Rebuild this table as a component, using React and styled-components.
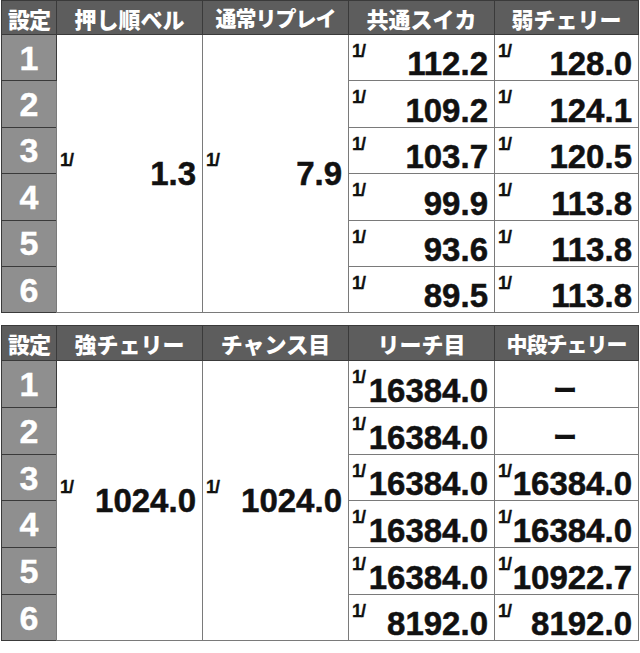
import React from "react";
import styled, { createGlobalStyle } from "styled-components";

const GlobalStyle = createGlobalStyle`
  html, body {
    margin: 0;
    padding: 0;
    background: #ffffff;
  }
  body {
    font-family: "Liberation Sans", Arial, sans-serif;
  }
`;

const Page = styled.div`
  width: 640px;
  padding: 0 0 0 1px;
  display: flex;
  flex-direction: column;
  gap: 12px;
`;

const Table = styled.table`
  width: 637px;
  table-layout: fixed;
  border-collapse: collapse;
  border: 1px solid #3c3c3c;
`;

const HeadCell = styled.th`
  height: ${(p) => p.$h}px;
  padding: 0;
  background: #5d5d5d;
  color: #ffffff;
  border: 1px solid #3a3a3a;
  font-family: "Noto Sans CJK JP", sans-serif;
  font-weight: 900;
  font-size: ${(p) => (p.$narrow ? "21px" : "22px")};
  letter-spacing: ${(p) => (p.$tight ? "-1px" : "0")};
  line-height: 1;
  text-align: center;
  white-space: nowrap;
`;

const LevelCell = styled.td`
  height: ${(p) => p.$h}px;
  padding: 0;
  background: #8f8f8f;
  color: #ffffff;
  border: 1px solid #3a3a3a;
  font-family: "Liberation Sans", Arial, sans-serif;
  font-weight: 700;
  font-size: 34px;
  line-height: 1;
  text-align: center;
  vertical-align: middle;
  -webkit-text-stroke: 0.4px #ffffff;
`;

const ValueCell = styled.td`
  padding: 0 6px 0 3px;
  background: #ffffff;
  border: 1px solid #7a7a7a;
  vertical-align: ${(p) => (p.$merged ? "middle" : "bottom")};
`;

const Inner = styled.div`
  display: flex;
  justify-content: space-between;
  align-items: ${(p) => (p.$merged ? "flex-start" : "flex-end")};
`;

const Sup = styled.span`
  align-self: flex-start;
  margin-top: ${(p) => (p.$merged ? "-6px" : "6px")};
  font-family: "Liberation Sans", Arial, sans-serif;
  font-size: 18px;
  font-weight: 700;
  line-height: 1;
  color: #111111;
  letter-spacing: -1px;
  -webkit-text-stroke: 0.3px #111111;
`;

const Num = styled.span`
  font-family: "Liberation Sans", Arial, sans-serif;
  font-size: 33px;
  font-weight: 700;
  line-height: 1;
  color: #111111;
  white-space: nowrap;
  -webkit-text-stroke: 0.5px #111111;
`;

const Dash = styled.div`
  display: flex;
  align-items: center;
  justify-content: center;
  padding-bottom: 6px;
  font-family: "Noto Sans CJK JP", sans-serif;
  font-weight: 900;
  font-size: 24px;
  line-height: 1;
  color: #111111;
`;

const Col = styled.col`
  width: ${(p) => p.$w}px;
`;

const Value = ({ v, merged, h }) =>
  v === "-" ? (
    <Dash>ー</Dash>
  ) : (
    <Inner $merged={merged} style={merged ? undefined : { height: h }}>
      <Sup $merged={merged}>1/</Sup>
      <Num>{v}</Num>
    </Inner>
  );

const table1 = {
  head: 33,
  row: 45.4,
  heads: ["押し順ベル", "通常リプレイ", "共通スイカ", "弱チェリー"],
  merged: ["1.3", "7.9"],
  rows: [
    ["112.2", "128.0"],
    ["109.2", "124.1"],
    ["103.7", "120.5"],
    ["99.9", "113.8"],
    ["93.6", "113.8"],
    ["89.5", "113.8"],
  ],
};

const table2 = {
  head: 34,
  row: 45.7,
  heads: ["強チェリー", "チャンス目", "リーチ目", "中段チェリー"],
  merged: ["1024.0", "1024.0"],
  rows: [
    ["16384.0", "-"],
    ["16384.0", "-"],
    ["16384.0", "16384.0"],
    ["16384.0", "16384.0"],
    ["16384.0", "10922.7"],
    ["8192.0", "8192.0"],
  ],
};

const ProbTable = ({ data }) => (
  <Table>
    <colgroup>
      <Col $w={55} />
      <Col $w={146} />
      <Col $w={146} />
      <Col $w={146} />
      <Col $w={144} />
    </colgroup>
    <thead>
      <tr>
        <HeadCell $h={data.head} $tight>
          設定
        </HeadCell>
        {data.heads.map((h) => (
          <HeadCell
            key={h}
            $h={data.head}
            $narrow={h.length > 5}
            $tight={h.length > 5}
          >
            {h}
          </HeadCell>
        ))}
      </tr>
    </thead>
    <tbody>
      {data.rows.map((r, i) => (
        <tr key={i}>
          <LevelCell $h={data.row}>{i + 1}</LevelCell>
          {i === 0 &&
            data.merged.map((m, j) => (
              <ValueCell key={j} rowSpan={6} $merged>
                <Value v={m} merged />
              </ValueCell>
            ))}
          {r.map((v, j) => (
            <ValueCell key={j}>
              <Value v={v} h={data.row - 1} />
            </ValueCell>
          ))}
        </tr>
      ))}
    </tbody>
  </Table>
);

export default function App() {
  return (
    <>
      <GlobalStyle />
      <Page>
        <ProbTable data={table1} />
        <ProbTable data={table2} />
      </Page>
    </>
  );
}
